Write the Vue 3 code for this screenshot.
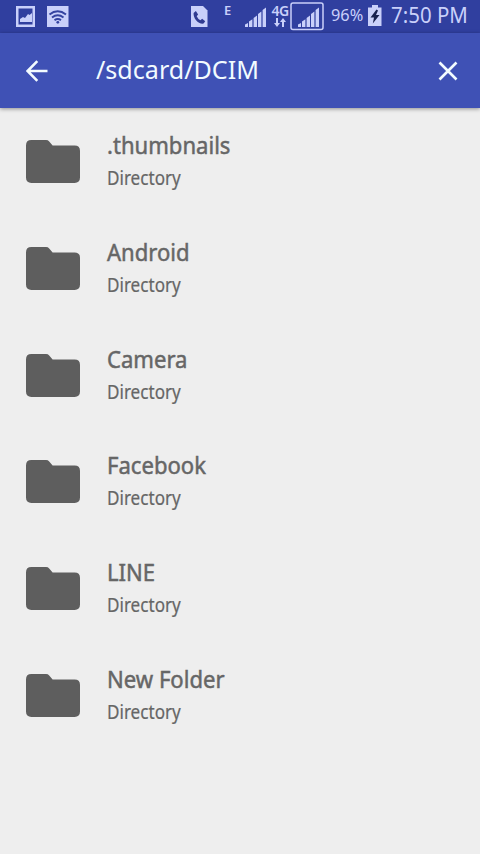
<script setup>
const folders = ['.thumbnails', 'Android', 'Camera', 'Facebook', 'LINE', 'New Folder']
</script>

<template>
  <div class="screen">
    <header class="status">
      <svg class="picture" width="20" height="22" viewBox="0 0 20 22">
        <path fill="currentColor" fill-rule="evenodd" d="M0 0h19v21H0zM2.5 2.5v16h14v-16z" />
        <path fill="currentColor" d="M4 16v-3l3-2 2 1 3-4 1.5 1L16 7v9z" />
      </svg>
      <svg class="wifi" width="22" height="22" viewBox="0 0 22 22">
        <rect width="21.5" height="21" fill="currentColor" />
        <g fill="none" stroke="#3443a0" stroke-width="2">
          <path d="M2.5 8.5q8.2-6.5 16.5 0M5 11.5q5.7-4.4 11.5 0M7.5 14.2q3.2-2.2 6.5 0" />
        </g>
        <circle cx="10.8" cy="16.3" r="1.4" fill="#3443a0" />
      </svg>
      <svg class="call" width="17" height="21" viewBox="0 0 17 21">
        <path fill="currentColor" d="M0 0h12l4.5 4.5V21H0z" />
        <path fill="#303b91" d="m2.6 7 2.3-2 2.2 3.5-1.4 1.7q1.2 2.7 3.7 4l1.8-1.4 3 2.4-1.6 2.4c-5.2.8-10.5-5.1-10-10.6z" />
      </svg>
      <span class="edge">E</span>
      <svg class="bars" width="22" height="20" viewBox="0 0 22 20">
        <path fill="currentColor" d="M0 17.5 3 16v4H0zM4 14.5l3.4-2.2V20H4zM8.6 11l3.4-2.5V20H8.6zM13 7l3.4-2.5V20H13zM17.6 3l3.4-2.5V20h-3.4z" />
      </svg>
      <div class="network">
        <span class="lte">4G</span>
        <svg width="12" height="9" viewBox="0 0 12 9">
          <path fill="currentColor" d="M2 0h2v5h2L3 9 0 5h2zM8 9h2V4h2L9 0 6 4h2z" />
        </svg>
      </div>
      <svg class="boxed" width="34" height="29" viewBox="0 0 34 29">
        <rect x="1" y="1" width="32" height="26.5" rx="2" fill="none" stroke="currentColor" stroke-width="1.5" />
        <path fill="currentColor" d="M8 22.5 11 21v4H8zM12 19.5l3.4-2.2V25H12zM16.6 16l3.4-2.5V25h-3.4zM21 12l3.4-2.5V25H21zM25.6 8l3.4-2.5V25h-3.4z" />
      </svg>
      <span class="percent">96%</span>
      <svg class="battery" width="14" height="21" viewBox="0 0 14 21">
        <path fill="currentColor" d="M4 0h6v2.5h3.5V21H0V2.5h4z" />
        <path fill="#17204f" d="m8.5 4.5-6 8H6l-1.2 6L11.5 10H8l2-4.5z" />
      </svg>
      <span class="clock">7:50 PM</span>
    </header>

    <nav class="bar">
      <svg class="back" width="22" height="22" viewBox="0 0 22 22">
        <path d="M21.5 11H2M11.3 1.2 1.5 11l9.8 9.8" />
      </svg>
      <h1 class="path">/sdcard/DCIM</h1>
      <svg class="close" width="20" height="20" viewBox="0 0 20 20">
        <path d="m1.5 1.5 17 17m0-17-17 17" />
      </svg>
    </nav>

    <ul class="list">
      <li v-for="name in folders" :key="name" class="row">
        <svg class="folder" width="54" height="43" viewBox="0 0 54 43">
          <path fill="currentColor" d="M5.4 0H20q2 0 3.2 1.4L26.6 5.4h22Q54 5.4 54 10.8v26.8Q54 43 48.6 43H5.4Q0 43 0 37.6V5.4Q0 0 5.4 0z" />
        </svg>
        <div class="labels">
          <span class="name">{{ name }}</span>
          <span class="kind">Directory</span>
        </div>
      </li>
    </ul>
  </div>
</template>

<style>
body {
  margin: 0;
  background: #eee;
}
</style>

<style scoped>
.screen {
  height: 854px;
  overflow: hidden;
  background: #eee;
  font-family: "Noto Sans", sans-serif;
}
svg {
  display: block;
  flex: none;
}
.status {
  display: flex;
  align-items: flex-start;
  box-sizing: border-box;
  height: 33px;
  background: #303f9f;
  color: #c9d0fa;
  white-space: nowrap;
}
.picture { margin: 6px 0 0 16px; }
.wifi { margin: 6px 0 0 11px; }
.call { margin: 6px 0 0 122px; }
.edge {
  width: 9px;
  margin: 3px 0 0 16px;
  font-size: 13px;
  line-height: 15px;
  font-weight: 600;
}
.bars { margin: 7px 0 0 12px; }
.network {
  display: flex;
  flex-direction: column;
  align-items: center;
  width: 18px;
  margin: 4px 0 0 4px;
}
.lte {
  font-size: 14px;
  line-height: 13px;
  font-weight: 600;
  letter-spacing: -0.5px;
}
.network svg { margin-top: 1px; }
.boxed { margin: 2px 0 0 1px; }
.percent {
  width: 37px;
  margin: 4px 0 0 7px;
  font-size: 17px;
  line-height: 22px;
  transform: scaleX(0.96);
  transform-origin: left;
}
.battery { margin: 5px 0 0 0; }
.clock {
  margin: 0 0 0 9px;
  font-size: 22px;
  line-height: 28px;
  transform: scaleX(0.93);
  transform-origin: left;
}
.bar {
  position: relative;
  display: flex;
  align-items: center;
  box-sizing: border-box;
  height: 75px;
  padding: 0 22px 0 26px;
  background: #3f51b5;
  color: #f2fbff;
  box-shadow: 0 1px 4px rgba(0, 0, 0, 0.4);
}
.bar svg {
  fill: none;
  stroke: currentColor;
  stroke-width: 2.6;
}
.path {
  margin: 0 auto 4px 48px;
  font-size: 26px;
  line-height: 36px;
  font-weight: 400;
  transform: scaleX(0.965);
  transform-origin: left;
}
.list {
  margin: 0;
  padding: 0.2px 0 0;
  list-style: none;
}
.row {
  display: flex;
  align-items: center;
  height: 106.8px;
  padding-left: 26px;
}
.folder { color: #5e5e5e; }
.labels {
  display: flex;
  flex-direction: column;
  align-items: flex-start;
  margin: 1px 0 0 27px;
  color: #666;
  white-space: nowrap;
}
.name {
  font-size: 24px;
  line-height: 33px;
  -webkit-text-stroke: 0.5px currentColor;
  transform: scaleX(0.92);
  transform-origin: left;
}
.kind {
  font-size: 19px;
  line-height: 35px;
  -webkit-text-stroke: 0.2px currentColor;
  transform: scaleX(0.9);
  transform-origin: left;
}
</style>
